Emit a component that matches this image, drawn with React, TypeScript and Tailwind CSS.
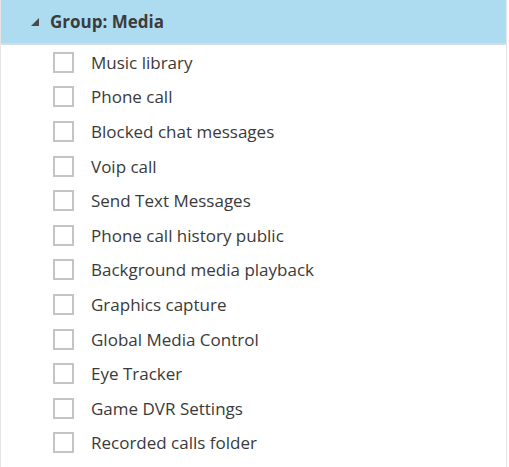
import React from 'react';

const items = [
  'Music library',
  'Phone call',
  'Blocked chat messages',
  'Voip call',
  'Send Text Messages',
  'Phone call history public',
  'Background media playback',
  'Graphics capture',
  'Global Media Control',
  'Eye Tracker',
  'Game DVR Settings',
  'Recorded calls folder',
];

const App: React.FC = () => {
  return (
    <div
      className="w-[509px] h-[467px] bg-white overflow-hidden"
      style={{ fontFamily: '"Open Sans", "Noto Sans", sans-serif' }}
    >
      <div className="w-[507px] h-full border-l border-r border-[#e4e4e4]">
        <div className="h-[45px] bg-[#addcf0] border-b-2 border-[#d6dde0] flex items-center pl-[30px]">
          <svg width="8" height="8" viewBox="0 0 8 8" className="mr-[11px] mt-[1px]">
            <polygon points="8,0 8,8 0,8" fill="#4a4a4a" />
          </svg>
          <span className="text-[17px] font-bold text-[#3c3c3c] leading-none">Group: Media</span>
        </div>
        <div className="flex flex-col">
          {items.map((label) => (
            <div key={label} className="h-[34.6px] flex items-center pl-[52px]">
              <div className="w-[21px] h-[21px] border-2 border-[#c4c4c4] bg-white" />
              <span className="ml-[17px] text-[17px] text-[#3a3a3a] leading-none">{label}</span>
            </div>
          ))}
        </div>
      </div>
    </div>
  );
};

export default App;
